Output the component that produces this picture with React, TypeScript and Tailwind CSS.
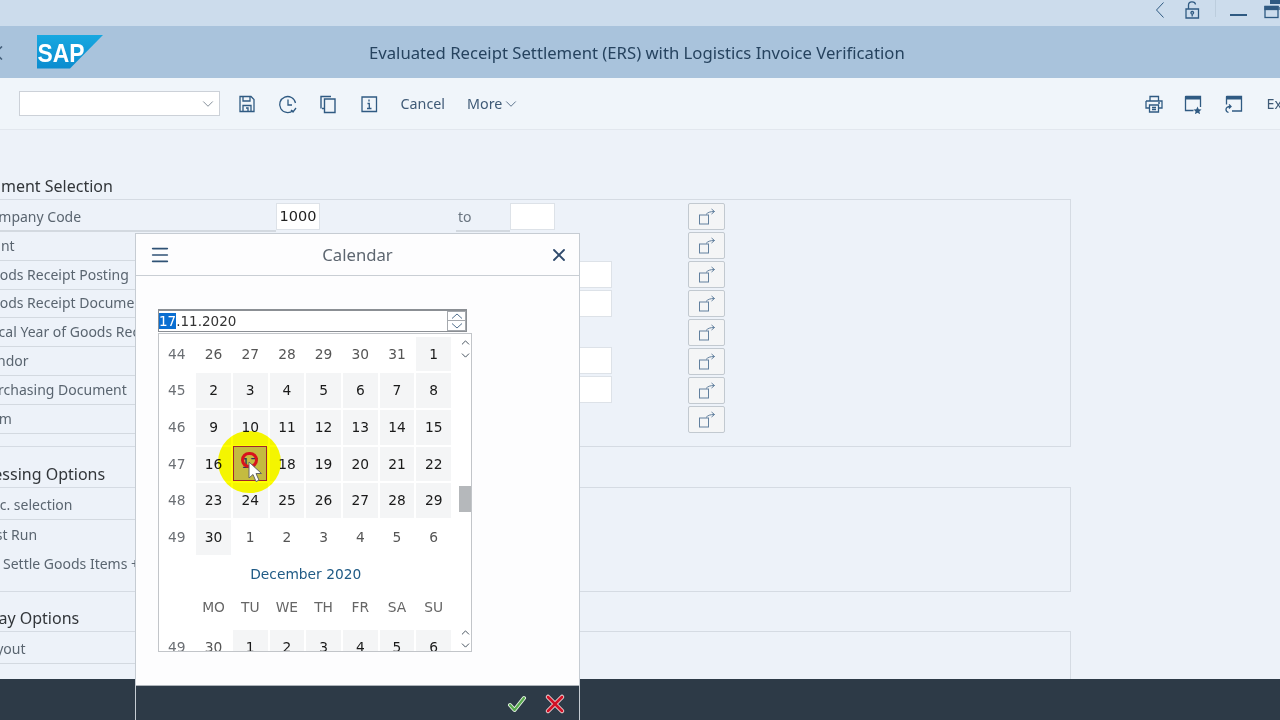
import React from "react";
import { ChevronDown, ChevronUp, Menu, X } from "lucide-react";

function NavIcon({ d, w = 20, h = 20, sw = 1.3, fill }: { d: string; w?: number; h?: number; sw?: number; fill?: string }) {
  return (
    <svg width={w} height={h} viewBox="0 0 20 20" fill="none" stroke="#2f5a82" strokeWidth={sw}>
      <path d={d} />
      {fill && <path d={fill} fill="#2f5a82" stroke="none" />}
    </svg>
  );
}

function SapLogo() {
  return (
    <svg width="66" height="34" viewBox="0 0 66 34">
      <defs>
        <linearGradient id="sapBlue" x1="0" y1="0" x2="0" y2="1">
          <stop offset="0" stopColor="#17a8e0" />
          <stop offset="1" stopColor="#0b8ccf" />
        </linearGradient>
      </defs>
      <polygon points="0,0 66,0 33,33.500 0,33.500" fill="url(#sapBlue)" />
      <text x="0.5" y="26.5" fontFamily="'Liberation Sans', sans-serif" fontSize="26" fontWeight="700" fill="#fff" textLength="47" lengthAdjust="spacingAndGlyphs">
        SAP
      </text>
    </svg>
  );
}

function ToolButton() {
  return (
    <div className="flex h-[27px] w-[37px] items-center justify-center rounded-[2px] border border-[#c2c9d0] bg-[#f4f5f6]">
      <svg width="18" height="18" viewBox="0 0 18 18" fill="none" stroke="#62809e" strokeWidth="1">
        <rect x="1.5" y="7" width="9" height="9" />
        <path d="M8 6.500C10 4.300 12 3.500 16.500 3.500M13.500 1l3 2.500-3 2.500" />
      </svg>
    </div>
  );
}

function FormRow({ label, value, to, high }: { label: string; value?: string; to?: boolean; high?: boolean }) {
  return (
    <div className="flex h-[28.850px] items-stretch">
      <div className={`flex w-[276px] shrink-0 items-center overflow-hidden border-[#d3d9e0] ${to ? "border-b-2" : "border-b pb-[1px]"}`}>
        <span className="ml-[-19px] whitespace-nowrap text-[14px] text-[#5a6570]">{label}</span>
      </div>
      <div className="flex w-[180px] shrink-0 items-start">
        {value !== undefined && (
          <div className="flex h-[27px] w-[44px] items-center justify-center border border-[#dde2e8] bg-white text-[14.500px] text-[#222] [font-family:'DejaVu_Sans',sans-serif]">
            {value}
          </div>
        )}
      </div>
      <div className={`flex w-[54px] shrink-0 items-center ${to ? "border-b-2 border-[#d3d9e0]" : ""}`}>
        {to && <span className="pl-[2px] text-[14px] text-[#6a7580]">to</span>}
      </div>
      <div className="w-[102px] shrink-0">
        {to && <div className="h-[27px] w-[45px] border border-[#dde2e8] bg-white" />}
        {high && <div className="ml-[56px] h-[27px] w-[46px] border border-[#dde2e8] bg-white" />}
      </div>
    </div>
  );
}

const weeks: { wk: number; days: { n: number; on: boolean }[] }[] = [
  { wk: 44, days: [26, 27, 28, 29, 30, 31, 1].map((n, i) => ({ n, on: i === 6 })) },
  { wk: 45, days: [2, 3, 4, 5, 6, 7, 8].map((n) => ({ n, on: true })) },
  { wk: 46, days: [9, 10, 11, 12, 13, 14, 15].map((n) => ({ n, on: true })) },
  { wk: 47, days: [16, 17, 18, 19, 20, 21, 22].map((n) => ({ n, on: true })) },
  { wk: 48, days: [23, 24, 25, 26, 27, 28, 29].map((n) => ({ n, on: true })) },
  { wk: 49, days: [30, 1, 2, 3, 4, 5, 6].map((n, i) => ({ n, on: i === 0 })) },
];

function Cell({ n, on }: { n?: number; on: boolean }) {
  return (
    <div className={`m-[1px] flex items-center justify-center ${on ? "bg-[#f4f5f6] text-[#1a1a1a]" : "text-[#555]"}`}>{n}</div>
  );
}

function CalendarDialog() {
  return (
    <div className="absolute left-[135px] top-[233px] z-10 flex h-[488px] w-[445px] flex-col border border-[#c6ccd3] bg-[#fdfdfe]">
      <div className="flex h-[42px] shrink-0 items-center border-b border-[#c9ced4] px-[13px]">
        <div className="flex-1">
          <Menu size={22} color="#2f5275" strokeWidth={1.8} />
        </div>
        <span className="text-[16.700px] text-[#5d6670]">Calendar</span>
        <div className="flex flex-1 justify-end">
          <X size={20} color="#2f4a6c" strokeWidth={2.2} className="-mr-[3px]" />
        </div>
      </div>
      <div className="flex-1 pl-[22px] pt-[33px] [font-family:'DejaVu_Sans',sans-serif]">
        <div className="flex h-[23px] w-[309px] items-center justify-between border border-t-2 border-[#8b8f94] bg-white">
          <span className="text-[13.500px] leading-[18px] text-[#333]">
            <span className="bg-[#0a6ed1] text-white">17</span>.11.2020
          </span>
          <div className="flex h-[20px] w-[19px] flex-col border border-[#a5a9ae]">
            <div className="flex h-[9px] items-center justify-center border-b border-[#a5a9ae]">
              <svg width="14" height="8" viewBox="0 0 14 8" fill="none" stroke="#52708e" strokeWidth="1">
                <path d="M2 6.500 7 2l5 4.500" />
              </svg>
            </div>
            <div className="flex h-[9px] items-center justify-center">
              <svg width="14" height="8" viewBox="0 0 14 8" fill="none" stroke="#52708e" strokeWidth="1">
                <path d="M2 1.500 7 6l5-4.500" />
              </svg>
            </div>
          </div>
        </div>
        <div className="mt-[1px] flex h-[319px] w-[314px] overflow-hidden border border-[#c2c5c9] bg-white text-[13.800px]">
          <div className="w-[300px] shrink-0 pt-[1.500px]">
            <div className="-ml-[0.500px] grid grid-cols-[repeat(8,36.7px)] auto-rows-[36.7px]">
              {weeks.map((w) => (
                <React.Fragment key={w.wk}>
                  <div className="flex items-center justify-center text-[#6b6f74]">{w.wk}</div>
                  {w.days.map((d, i) => (
                    <Cell key={i} n={w.wk === 47 && i === 1 ? undefined : d.n} on={d.on} />
                  ))}
                </React.Fragment>
              ))}
              <div className="col-span-8 flex items-center justify-center pl-[1px] text-[#1f5a85]">December 2020</div>
              <div />
              {["MO", "TU", "WE", "TH", "FR", "SA", "SU"].map((d) => (
                <div key={d} className="flex items-center justify-center pb-[6px] text-[#666]">
                  {d}
                </div>
              ))}
              <div className="flex items-center justify-center text-[#6b6f74]">49</div>
              <Cell n={30} on={false} />
              {[1, 2, 3, 4, 5, 6].map((n) => (
                <Cell key={n} n={n} on />
              ))}
            </div>
          </div>
          <div className="flex flex-1 flex-col items-center pt-[1.500px]">
            <ChevronUp size={13} color="#44505c" strokeWidth={1.8} />
            <ChevronDown size={13} color="#44505c" strokeWidth={1.8} />
            <div className="mt-[124px] h-[26px] w-full bg-[#b5b8bb]" />
            <div className="flex-1" />
            <ChevronUp size={13} color="#44505c" strokeWidth={1.8} />
            <ChevronDown size={13} color="#44505c" strokeWidth={1.8} className="mb-[-1px]" />
          </div>
        </div>
      </div>
      <div className="flex h-[35px] shrink-0 items-center justify-end gap-[17px] border-t border-[#aeb4ba] bg-[#2d3a47] pr-[13px] pt-[2px]">
        <svg width="20" height="20" viewBox="0 0 20 20" fill="none" strokeLinecap="round" strokeLinejoin="round">
          <path d="M3 11l4.500 5L17 4" stroke="#e8f2e6" strokeWidth="4" />
          <path d="M3 11l4.500 5L17 4" stroke="#58a94d" strokeWidth="2.200" />
        </svg>
        <svg width="22" height="22" viewBox="0 0 22 22" fill="none" strokeLinecap="round">
          <path d="M4 4l14 14M18 4 4 18" stroke="#f3dfe0" strokeWidth="4.500" />
          <path d="M4 4l14 14M18 4 4 18" stroke="#cf1226" strokeWidth="2.800" />
        </svg>
      </div>
    </div>
  );
}

function CursorHighlight() {
  return (
    <>
      <div className="absolute left-[218px] top-[431px] z-20 h-[62px] w-[63px] rounded-full bg-[#ffff00] mix-blend-multiply" />
      <div className="absolute left-[233px] top-[446px] z-30 flex h-[35px] w-[34px] items-center justify-center border border-[#a0272a] bg-[#c4bb40] text-[13.800px] text-[#2a3a5a] [font-family:'DejaVu_Sans',sans-serif]">
        17
      </div>
      <div className="absolute left-[241px] top-[452px] z-30 h-[16px] w-[17px] rounded-full border-[3px] border-[#d8131c]" />
      <svg className="absolute left-[248px] top-[461px] z-30" width="16" height="22" viewBox="0 0 16 22">
        <path d="M1 1v16l4-3.500 3 7 3-1.300-3-6.700h5.500z" fill="#fff" stroke="#666" strokeWidth="1" />
      </svg>
    </>
  );
}

export default function App() {
  return (
    <div className="relative flex h-[720px] w-[1280px] flex-col overflow-hidden bg-[#edf2f9] [font-family:'Noto_Sans',sans-serif]">
      <div className="flex h-[26px] shrink-0 items-start justify-end bg-[#ccdcec]">
        <div className="mr-[-6px] flex items-start">
          <NavIcon d="M13.500 2.500 6.500 10l7 7.500" sw={1} />
          <div className="ml-[12px]">
            <NavIcon d="M4 9h12.500v9H4zM6.500 9V5C6.500 1 13 1 13.500 4.500M10.200 11.500a1.300 1.300 0 1 0 .1 0zM10.200 13.500v3" />
          </div>
          <div className="ml-[13px] h-[17px] w-px bg-[#bccddd]" />
          <div className="ml-[14px] mt-[14px] h-[2px] w-[17px] bg-[#2f5a82]" />
          <svg width="22" height="22" viewBox="0 0 22 22" fill="none" stroke="#2f5a82" strokeWidth="1.300" className="ml-[17px]">
            <rect x="6" y="-1" width="14" height="5" fill="#2f5a82" stroke="none" />
            <rect x="1" y="6.500" width="13" height="11" />
            <rect x="1" y="6.500" width="13" height="3" fill="#2f5a82" />
            <path d="M16 7v3" />
          </svg>
        </div>
      </div>

      <div className="relative flex h-[52px] shrink-0 items-center bg-[#a9c3dc]">
        <svg className="absolute left-[-6px] top-[20px]" width="10" height="14" viewBox="0 0 10 14" fill="none" stroke="#46607b" strokeWidth="1.600">
          <path d="M8 0.500 1 7l7 6.500" />
        </svg>
        <div className="ml-[37px] mt-[-1px] shrink-0">
          <SapLogo />
        </div>
        <div className="ml-[266px] mt-[1px] whitespace-nowrap text-[16.700px] text-[#26435f]">Evaluated Receipt Settlement (ERS) with Logistics Invoice Verification</div>
      </div>

      <div className="flex h-[52px] shrink-0 items-center border-b border-[#e2e7ee] bg-[#f0f5fa] text-[14.300px] text-[#3f5a76]">
        <div className="ml-[19px] flex h-[25px] w-[201px] items-center justify-end border border-[#ccd1d8] bg-white pr-[2px]">
          <ChevronDown size={18} color="#5c6a78" strokeWidth={1} />
        </div>
        <div className="ml-[17px] flex items-center gap-[20.500px]">
          <NavIcon d="M3 2.500h11l3 3v12H3zM6 2.500v4.500h7V2.500M6 17.500v-6h8v6M9 14h2v3.500" />
          <NavIcon d="M15 16.500A8 8 0 1 1 17.500 9M10 5.500V11h4M13 16l2 2 3-4" />
          <NavIcon d="M3 14.500V2.500h10M6.500 5h10.500v13.500H6.500zM4 14.500h2.500" sw={1.4} />
          <NavIcon d="M3 3h14.500v14.500H3zM10 5.500v2M8.500 9.500H10.300v5M8 14.500h4.500" />
        </div>
        <span className="ml-[22px]">Cancel</span>
        <span className="ml-[22px]">More</span>
        <ChevronDown size={18} color="#3f5a76" strokeWidth={1.100} />
        <div className="ml-auto mr-[-2px] flex items-center">
          <NavIcon d="M6 7V2.500h8.500V7M2 7h16v7h-3M5 14H2V7M5.500 11h9v7h-9zM8 13.500h4M8 15.500h4M14 9h2" />
          <div className="ml-[19px]">
            <NavIcon
              d="M2.500 2.500h15v10.500M2.500 2.500v14h8"
              fill="M2 2h16v3.500H2zM14.500 12.500l1.200 2.800 2.800.2-2.100 1.900.7 2.800-2.600-1.500-2.600 1.500.7-2.800-2.100-1.900 2.800-.2z"
            />
          </div>
          <div className="ml-[21px]">
            <NavIcon d="M2.500 2.500h15v14.500H8M2.500 2.500v8M6.500 12.500c-3 0-4.500 1.200-4.500 3 0 1.500 1 2.500 2.500 3M5 10.500l2 2-2 2" fill="M2 2h16v3.500H2z" />
          </div>
          <span className="ml-[22px]">Ex</span>
        </div>
      </div>

      <div className="flex flex-1 flex-col pt-[46px]">
        <h2 className="ml-[-38px] text-[16px] leading-[20px] text-[#32363a]">Document Selection</h2>
        <div className="mt-[3px] flex h-[248px] w-[1071px] border border-l-0 border-[#d5dbe3] pt-[3px]">
          <div className="flex w-[612px] flex-col">
            <FormRow label="Company Code" value="1000" to />
            <FormRow label="Plant" />
            <FormRow label="Goods Receipt Posting" high />
            <FormRow label="Goods Receipt Document" high />
            <FormRow label="Fiscal Year of Goods Receipt" />
            <FormRow label="Vendor" high />
            <FormRow label="Purchasing Document" high />
            <FormRow label="Item" />
          </div>
          <div className="ml-[76px] flex flex-col gap-[2px]">
            {[0, 1, 2, 3, 4, 5, 6, 7].map((i) => (
              <ToolButton key={i} />
            ))}
          </div>
        </div>

        <h2 className="ml-[-40px] mt-[17px] text-[16px] leading-[20px] text-[#32363a]">Processing Options</h2>
        <div className="mt-[3px] flex h-[105px] w-[1071px] flex-col border border-l-0 border-[#d5dbe3] pt-[3px]">
          <div className="w-[276px]">
            <FormRow label="Doc. selection" />
          </div>
          <div className="flex h-[29px] items-center text-[14px] text-[#5a6570]">
            <span className="ml-[-19px]">Test Run</span>
          </div>
          <div className="flex h-[29px] items-center whitespace-nowrap text-[14px] text-[#5a6570]">
            <span className="ml-[3px]">Settle Goods Items + Planned Delivery</span>
          </div>
        </div>

        <h2 className="ml-[-39px] mt-[16px] text-[16px] leading-[20px] text-[#32363a]">Display Options</h2>
        <div className="mt-[3px] h-[60px] w-[1071px] border border-l-0 border-[#d5dbe3] pt-[3px]">
          <FormRow label="Layout" />
        </div>
      </div>

      <div className="absolute inset-x-0 bottom-0 h-[41px] bg-[#2d3a47]" />
      <CalendarDialog />
      <CursorHighlight />
    </div>
  );
}
